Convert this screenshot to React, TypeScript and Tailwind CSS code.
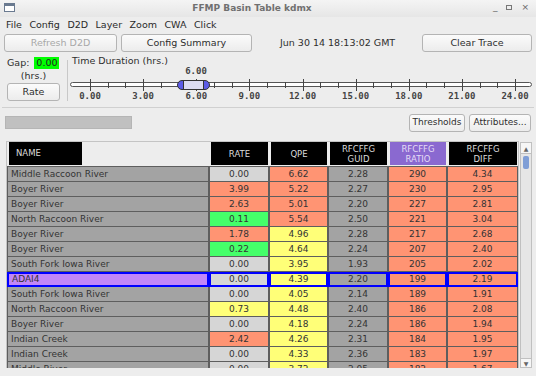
import React from "react";

type Row = {
  name: string;
  rate: string;
  rateColor: string;
  qpe: string;
  qpeColor: string;
  guid: string;
  ratio: string;
  diff: string;
  selected?: boolean;
};

const GRAY = "bg-[#a3a3a3]";
const LIGHT = "bg-[#d6d6d6]";
const SALMON = "bg-[#ff9473]";
const GREEN = "bg-[#45ff6a]";
const YELLOW = "bg-[#ffff78]";

const rows: Row[] = [
  { name: "Middle Raccoon River", rate: "0.00", rateColor: LIGHT, qpe: "6.62", qpeColor: SALMON, guid: "2.28", ratio: "290", diff: "4.34" },
  { name: "Boyer River", rate: "3.99", rateColor: SALMON, qpe: "5.22", qpeColor: SALMON, guid: "2.27", ratio: "230", diff: "2.95" },
  { name: "Boyer River", rate: "2.63", rateColor: SALMON, qpe: "5.01", qpeColor: SALMON, guid: "2.20", ratio: "227", diff: "2.81" },
  { name: "North Raccoon River", rate: "0.11", rateColor: GREEN, qpe: "5.54", qpeColor: SALMON, guid: "2.50", ratio: "221", diff: "3.04" },
  { name: "Boyer River", rate: "1.78", rateColor: SALMON, qpe: "4.96", qpeColor: YELLOW, guid: "2.28", ratio: "217", diff: "2.68" },
  { name: "Boyer River", rate: "0.22", rateColor: GREEN, qpe: "4.64", qpeColor: YELLOW, guid: "2.24", ratio: "207", diff: "2.40" },
  { name: "South Fork Iowa River", rate: "0.00", rateColor: LIGHT, qpe: "3.95", qpeColor: YELLOW, guid: "1.93", ratio: "205", diff: "2.02" },
  { name: "ADAI4", rate: "0.00", rateColor: LIGHT, qpe: "4.39", qpeColor: YELLOW, guid: "2.20", ratio: "199", diff: "2.19", selected: true },
  { name: "South Fork Iowa River", rate: "0.00", rateColor: LIGHT, qpe: "4.05", qpeColor: YELLOW, guid: "2.14", ratio: "189", diff: "1.91" },
  { name: "North Raccoon River", rate: "0.73", rateColor: YELLOW, qpe: "4.48", qpeColor: YELLOW, guid: "2.40", ratio: "186", diff: "2.08" },
  { name: "Boyer River", rate: "0.00", rateColor: LIGHT, qpe: "4.18", qpeColor: YELLOW, guid: "2.24", ratio: "186", diff: "1.94" },
  { name: "Indian Creek", rate: "2.42", rateColor: SALMON, qpe: "4.26", qpeColor: YELLOW, guid: "2.31", ratio: "184", diff: "1.95" },
  { name: "Indian Creek", rate: "0.00", rateColor: LIGHT, qpe: "4.33", qpeColor: YELLOW, guid: "2.36", ratio: "183", diff: "1.97" },
  { name: "Middle River", rate: "0.00", rateColor: LIGHT, qpe: "3.72", qpeColor: YELLOW, guid: "2.05", ratio: "182", diff: "1.67" },
];

const menus = ["File", "Config", "D2D", "Layer", "Zoom", "CWA", "Click"];
const ticks = ["0.00", "3.00", "6.00", "9.00", "12.00", "15.00", "18.00", "21.00", "24.00"];
const mono = { fontFamily: '"DejaVu Sans Mono", monospace' };

function Button({
  label,
  className,
  disabled,
}: {
  label: string;
  className: string;
  disabled?: boolean;
}) {
  return (
    <div
      className={`flex items-center justify-center rounded-[3px] border border-[#b4b4b4] bg-gradient-to-b from-[#fbfbfb] to-[#ececec] ${
        disabled ? "text-[#a8a8a8]" : "text-[#2e2e2e]"
      } ${className}`}
    >
      {label}
    </div>
  );
}

// the duration slider: track, tick marks and the thumb sitting on 6.00
function Slider() {
  const lines: React.ReactElement[] = [];
  for (let i = 0; i <= 24; i++) {
    const x = Math.round(20 + (i * 53.125) / 3) + 0.5;
    const big = i % 3 === 0;
    lines.push(
      <line
        key={i}
        x1={x}
        x2={x}
        y1={big ? 1 : 4}
        y2={big ? 13 : 10}
        stroke="#444"
        strokeWidth={1}
      />,
    );
  }
  return (
    <svg width="465" height="14" className="block">
      <rect x="0.5" y="4.5" width="461" height="4" rx="2" fill="#fff" stroke="#555" />
      {lines}
      <rect x="107.5" y="2.5" width="32" height="9" rx="4.5" fill="#5b5be6" stroke="#333" />
      <rect x="113.5" y="2.5" width="20" height="9" fill="#dcdcf2" stroke="#333" />
    </svg>
  );
}

function Cell({
  children,
  className,
  selected,
}: {
  children: React.ReactNode;
  className: string;
  selected?: boolean;
}) {
  return (
    <div
      className={`flex h-[15px] items-center leading-none ${
        selected ? "border-2 border-[#0000ff]" : "border-x border-b border-[#5e5e5e]"
      } ${className}`}
    >
      {children}
    </div>
  );
}

function Header({ label, purple }: { label: React.ReactNode; purple?: boolean }) {
  return (
    <div className="pl-[2px] pr-[1px]">
      <div
        className={`flex h-[23px] flex-col items-center justify-center text-center text-[8.5px] leading-[10px] ${
          purple ? "bg-[#8a69d0] text-[#e4dcf6]" : "bg-black text-[#dcdcdc]"
        }`}
      >
        {label}
      </div>
    </div>
  );
}

export default function App() {
  return (
    <div
      className="flex h-[376px] w-[536px] flex-col overflow-hidden bg-[#ededed] text-[9.5px] text-[#2e2e2e]"
      style={{ fontFamily: '"DejaVu Sans", sans-serif' }}
    >
      {/* title bar */}
      <div className="relative flex h-[17px] items-center justify-center bg-gradient-to-b from-[#f4f4f4] to-[#e6e6e6] pr-[32px]">
        <div className="absolute left-[4px] top-[3px] h-[9px] w-[11px] border border-[#6a7a90] bg-white">
          <div className="h-[2px] bg-[#6a7a90]" />
        </div>
        <span className="text-[9px] font-bold text-[#707070]">FFMP Basin Table kdmx</span>
        <div className="absolute right-[7px] top-[3px] flex items-center gap-[9px] text-[9px] leading-[9px] text-[#666]">
          <span>_</span>
          <span className="h-[5px] w-[6px] border border-[#777]" />
          <span>×</span>
        </div>
      </div>

      {/* menu bar */}
      <div className="flex h-[16px] items-center gap-[7.5px] pl-[6px] text-[#2a2a2a]">
        {menus.map((m) => (
          <span key={m}>{m}</span>
        ))}
      </div>

      {/* button row */}
      <div className="flex h-[19px] items-center pl-[4px] pt-px">
        <Button label="Refresh D2D" className="h-[18px] w-[113px]" disabled />
        <Button label="Config Summary" className="ml-[4px] h-[18px] w-[131px]" />
        <span className="ml-[28px]">Jun 30 14 18:13:02 GMT</span>
        <Button label="Clear Trace" className="ml-auto mr-[4px] h-[18px] w-[110px]" />
      </div>

      {/* gap / time duration */}
      <div className="mt-[5px] flex h-[50px]">
        <div className="flex w-[67px] flex-col items-start pl-[7px]">
          <div className="flex h-[12px] items-center gap-[5px]">
            <span>Gap:</span>
            <span className="flex h-[12px] w-[25px] items-center justify-center bg-[#00ff00] text-[#222]">
              0.00
            </span>
          </div>
          <span className="mt-[2px] h-[10px] w-[53px] text-center leading-[10px]">(hrs.)</span>
          <Button label="Rate" className="mt-[2px] h-[18px] w-[53px]" />
        </div>
        <div className="mt-[3px] h-[41px] w-px bg-[#c8c8c8]" />
        <div className="-mt-[1px] flex flex-col pl-[2px]">
          <span className="h-[10px] pl-[2px] leading-[10px]">Time Duration (hrs.)</span>
          <div
            className="flex h-[12px] w-[465px] items-center text-[9px] font-bold text-[#444]"
            style={mono}
          >
            <span className="ml-[106px] w-[40px] text-center">6.00</span>
          </div>
          <Slider />
          <div
            className="flex h-[10px] w-[465px] items-center justify-between text-[9px] font-bold text-[#444]"
            style={mono}
          >
            {ticks.map((t) => (
              <span key={t} className="w-[40px] text-center">
                {t}
              </span>
            ))}
          </div>
        </div>
      </div>

      <div className="mx-[2px] h-px bg-[#d0d0d0]" />

      {/* filter row */}
      <div className="flex h-[29px] items-center px-[5px]">
        <div className="h-[13px] w-[127px] border border-[#b5b5b5] bg-[#c0c0c0]" />
        <Button label="Thresholds" className="ml-auto h-[18px] w-[56px] text-[9px]" />
        <Button label="Attributes..." className="ml-[4px] h-[18px] w-[62px] text-[9px]" />
      </div>

      {/* table */}
      <div className="mt-[4px] flex min-h-0 flex-1 pl-[6px] pr-[4px]">
        <div className="flex min-h-0 w-[513px] flex-col overflow-hidden border border-b-0 border-[#c4c4c4]">
          <div className="grid h-[26px] grid-cols-[202px_60px_59px_60px_59px_71px] items-end">
            <div className="pl-[2px]">
              <div className="flex h-[23px] w-[73px] items-center bg-black pl-[7px] text-[8.5px] text-[#dcdcdc]">
                NAME
              </div>
            </div>
            <Header label="RATE" />
            <Header label="QPE" />
            <Header label={<><span>RFCFFG</span><span>GUID</span></>} />
            <Header label={<><span>RFCFFG</span><span>RATIO</span></>} purple />
            <Header label={<><span>RFCFFG</span><span>DIFF</span></>} />
          </div>
          <div className="mt-[1px] border-t border-[#5e5e5e] text-[9px]">
            {rows.map((r, i) => (
              <div key={i} className="grid grid-cols-[202px_60px_59px_60px_59px_71px] text-[#333]">
                <Cell
                  selected={r.selected}
                  className={`${r.selected ? "bg-[#c287f8]" : GRAY} pl-[3px]`}
                >
                  {r.name}
                </Cell>
                <Cell selected={r.selected} className={`${r.rateColor} justify-center`}>
                  {r.rate}
                </Cell>
                <Cell selected={r.selected} className={`${r.qpeColor} justify-center`}>
                  {r.qpe}
                </Cell>
                <Cell selected={r.selected} className={`${GRAY} justify-center`}>
                  {r.guid}
                </Cell>
                <Cell selected={r.selected} className={`${SALMON} justify-center`}>
                  {r.ratio}
                </Cell>
                <Cell selected={r.selected} className={`${SALMON} justify-center`}>
                  {r.diff}
                </Cell>
              </div>
            ))}
          </div>
        </div>
        {/* scrollbar */}
        <div className="ml-[1px] mt-[1px] flex w-[12px] flex-col border border-[#c0c0c0] bg-[#e6e6e6]">
          <div className="flex h-[11px] items-center justify-center border-b border-[#c0c0c0] bg-[#f6f6f6] text-[6px] text-[#666]">
            ▲
          </div>
          <div className="mx-[2px] mt-[2px] h-[13px] rounded-[2px] bg-[#7f9ed6]" />
          <div className="flex-1" />
          <div className="flex h-[9px] items-center justify-center border-t border-[#c0c0c0] bg-[#f6f6f6] text-[6px] text-[#666]">
            ▼
          </div>
        </div>
      </div>
      <div className="h-[8px]" />
    </div>
  );
}
